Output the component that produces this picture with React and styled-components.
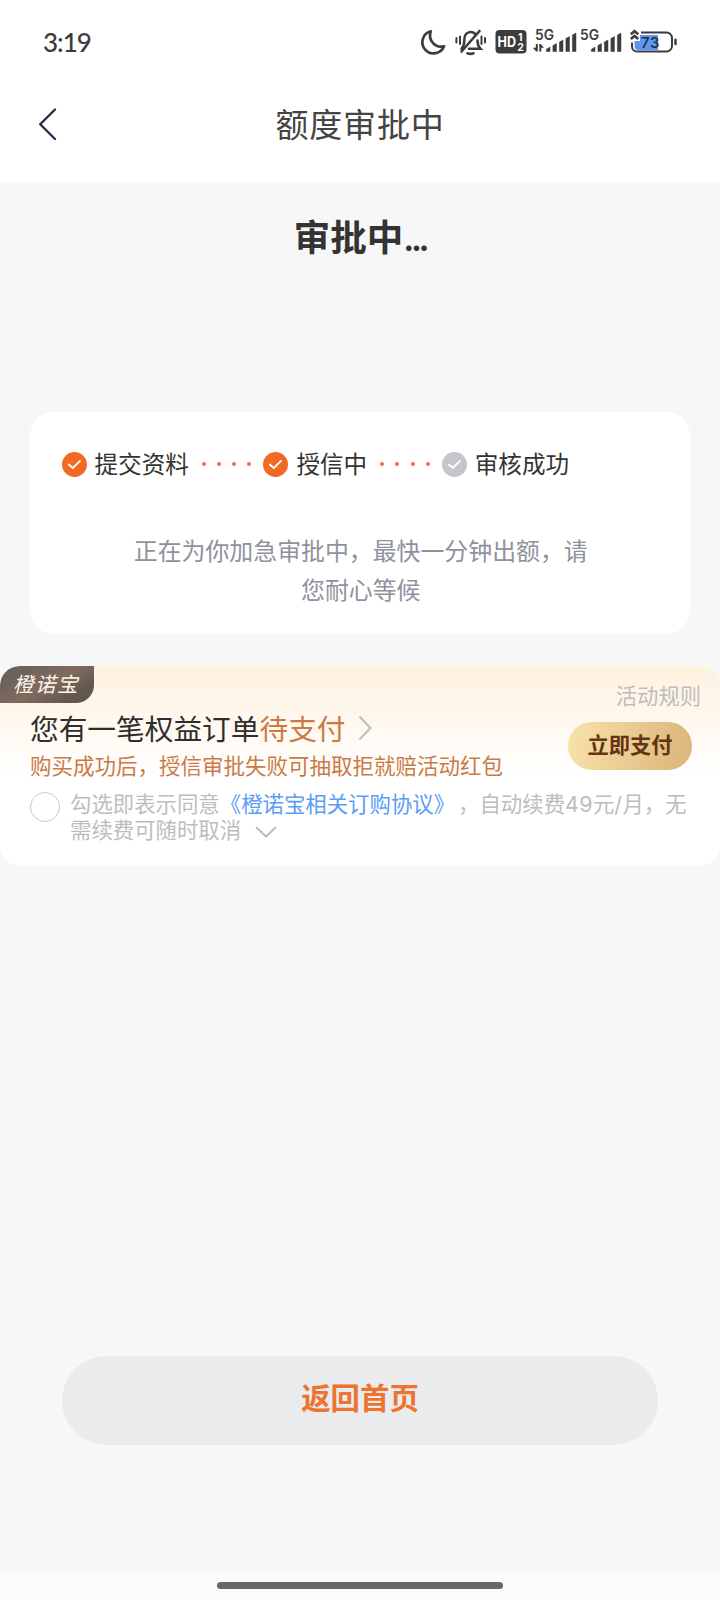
import React from 'react'
import styled, { createGlobalStyle } from 'styled-components'

const GlobalStyle = createGlobalStyle`
  * {
    box-sizing: border-box;
  }
  body {
    margin: 0;
    background: #f7f7f7;
    font-family: "Noto Sans CJK SC", sans-serif;
  }
`

const steps = [
  { label: '提交资料', done: true },
  { label: '授信中', done: true },
  { label: '审核成功', done: false },
]

function Moon() {
  return (
    <svg width="26" height="26" viewBox="0 0 26 26" fill="none">
      <path d="M9.800 2.300A11.200 11.200 0 1 0 23 17.200A11.200 11.200 0 0 1 9.800 2.300Z" stroke="#3c3c3c" strokeWidth="2.700" strokeLinejoin="round" />
    </svg>
  )
}

function BellOff() {
  return (
    <svg width="32" height="28" viewBox="0 0 32 28" fill="none" stroke="#3c3c3c" strokeWidth="2.600" strokeLinecap="round">
      <path d="M6.500 20.800c2.200-2.200 2.800-4 2.800-8.800c0-5 2.600-8 6.200-8c2.400 0 4.300 1 5.400 3" />
      <path d="M14 20.800h11.500c-2.200-2.200-3-4-3-8.300" />
      <path d="M6.500 23.500L24.500 3" />
      <path d="M12.500 25.300q3 1.200 6 0" />
      <path d="M1.400 10v4.500M5 8.500v7.500M26.500 8.500v7.500M30 10v4.500" strokeWidth="2" />
    </svg>
  )
}

function HdBadge() {
  return (
    <svg width="32" height="24" viewBox="0 0 32 24">
      <rect x="0.500" y="0" width="31" height="23.500" rx="4" fill="#3c3c3c" />
      <SvgText x="2.500" y="17" $size={14} fill="#fff" textLength="18.500" lengthAdjust="spacingAndGlyphs">HD</SvgText>
      <SvgText x="23" y="11" $size={10.5} fill="#fff">1</SvgText>
      <SvgText x="22.300" y="21" $size={10.5} fill="#fff">2</SvgText>
    </svg>
  )
}

function Signal({ data }) {
  return (
    <svg width="42" height="26" viewBox="0 0 42 26" fill="#3c3c3c">
      <SvgText x="0" y="11" $size={14.5} $weight={600} textLength="19" lengthAdjust="spacingAndGlyphs">5G</SvgText>
      {data && <path d="M.8 15h2v7.500H1.300L-2.200 18.800h3zM4.300 22.500V15h1.500L9 18.700H6.300v3.800z" />}
      <path d="M11.400 22.500v-2.300l3.600-2.200v4.500zM17.900 22.500v-6l3.600-2v8zM24.400 22.500v-9.500l3.600-2v11.500zM30.900 22.500v-13l3.600-2v15zM37.400 22.500v-16.500l3.600-2v18.500z" stroke="#3c3c3c" strokeWidth="0.500" strokeLinejoin="round" />
    </svg>
  )
}

function Battery() {
  return (
    <svg width="48" height="26" viewBox="0 0 48 26" fill="none">
      <path d="M4.500 12v5a4 4 0 0 0 4 4H28V6H10v6Z" fill="#5c96f5" />
      <path d="M11 3.500h25.500a5.500 5.500 0 0 1 5.500 5.500v8a5.500 5.500 0 0 1-5.500 5.500H7a5 5 0 0 1-5-5v-4" stroke="#3c3c3c" strokeWidth="2" />
      <path d="M0.800 5.200L4.500 2.200L8.300 5.200M0.800 10L4.500 7L8.300 10" stroke="#3c3c3c" strokeWidth="2.600" />
      <path d="M45.500 10.800v4.200" stroke="#3c3c3c" strokeWidth="2.500" strokeLinecap="round" />
      <SvgText x="11" y="18.500" $size={15} $weight={500} fill="#252b3a" textLength="18.500">73</SvgText>
    </svg>
  )
}

function CheckDot({ done }) {
  return (
    <svg width="25" height="25" viewBox="0 0 25 25" fill="none">
      <circle cx="12.500" cy="12.500" r="12.500" fill={done ? '#f06a25' : '#c5c5cb'} />
      <path d="M6.800 12.500L10.800 16L18 8.800" stroke="#fff" strokeWidth="1.800" strokeLinecap="round" strokeLinejoin="round" />
    </svg>
  )
}

function App() {
  return (
    <Page>
      <GlobalStyle />
      <StatusBar>
        <Time>3:19</Time>
        <StatusIcons>
          <Moon />
          <BellOff />
          <HdBadge />
          <Signals>
            <Signal data />
            <Signal />
          </Signals>
          <Battery />
        </StatusIcons>
      </StatusBar>

      <NavBar>
        <svg width="20" height="34" viewBox="0 0 20 34" fill="none">
          <path d="M18 1.500L3.200 16.300L18 31" stroke="#252a48" strokeWidth="2.300" strokeLinecap="round" strokeLinejoin="round" />
        </svg>
        <NavTitle>额度审批中</NavTitle>
      </NavBar>

      <Heading>审批中<Dots>...</Dots></Heading>

      <ProgressCard>
        <Steps>
          {steps.map((step, i) => (
            <React.Fragment key={step.label}>
              {i > 0 && <Trail><i /><i /><i /><i /></Trail>}
              <Step><CheckDot done={step.done} /><span>{step.label}</span></Step>
            </React.Fragment>
          ))}
        </Steps>
        <Hint>正在为你加急审批中，最快一分钟出额，请您耐心等候</Hint>
      </ProgressCard>

      <Promo>
        <PromoHead>
          <Tag>橙诺宝</Tag>
          <Rules>活动规则</Rules>
        </PromoHead>
        <PromoMain>
          <div>
            <OrderTitle>
              您有一笔权益订单<em>待支付</em>
              <svg width="16" height="26" viewBox="0 0 16 26" fill="none">
                <path d="M1.500 1.500L12.500 13L1.500 24.500" stroke="#bdbdc1" strokeWidth="2" />
              </svg>
            </OrderTitle>
            <OrderNote>购买成功后，授信审批失败可抽取拒就赔活动红包</OrderNote>
          </div>
          <PayButton>立即支付</PayButton>
        </PromoMain>
        <Agreement>
          <Radio />
          <AgreementText>
            勾选即表示同意<a>《橙诺宝相关订购协议》</a>，自动续费<Num>49</Num>元<Num>/</Num>月，无需续费可随时取消
            <svg width="24" height="12" viewBox="0 0 24 12" fill="none">
              <path d="M2 1L12 10.500L22 1" stroke="#bdbdc1" strokeWidth="2" />
            </svg>
          </AgreementText>
        </Agreement>
      </Promo>

      <HomeButton>返回首页</HomeButton>
      <GestureBar><span /></GestureBar>
    </Page>
  )
}

const SvgText = styled.text`
  font-family: Inter, sans-serif;
  font-size: ${(p) => p.$size}px;
  font-weight: ${(p) => p.$weight || 700};
`

const Page = styled.div`
  width: 720px;
  height: 1600px;
  display: flex;
  flex-direction: column;
  background: #f7f7f7;
  overflow: hidden;
`

const StatusBar = styled.div`
  height: 84px;
  flex-shrink: 0;
  padding: 0 42px 0 43px;
  display: flex;
  align-items: center;
  justify-content: space-between;
  background: #fff;
`

const Time = styled.div`
  font-family: Lato, sans-serif;
  font-size: 26px;
  font-weight: 500;
  letter-spacing: -1px;
  color: #3c3c3c;
`

const StatusIcons = styled.div`
  display: flex;
  align-items: center;
  gap: 8px;

  svg {
    display: block;
    overflow: visible;
  }
`

const Signals = styled.div`
  display: flex;
  gap: 3px;
`

const NavBar = styled.div`
  height: 98px;
  flex-shrink: 0;
  padding: 0 37px 17px;
  display: grid;
  grid-template-columns: 20px 1fr 20px;
  align-items: center;
  background: #fff;
`

const NavTitle = styled.div`
  padding-bottom: 3px;
  font-size: 33px;
  line-height: 40px;
  letter-spacing: 0.8px;
  text-align: center;
  color: #444;
`

const Heading = styled.h1`
  margin: 27px 0 0;
  height: 55px;
  line-height: 54px;
  font-size: 36.5px;
  font-weight: 700;
  text-align: center;
  color: #333;
`

const Dots = styled.span`
  font-family: Inter, sans-serif;
  font-size: 33px;
  letter-spacing: -3.4px;
`

const ProgressCard = styled.div`
  height: 222px;
  flex-shrink: 0;
  margin: 148px 30px 0;
  padding: 35px 30px 0 31.5px;
  border-radius: 24px;
  background: #fff;
`

const Steps = styled.div`
  display: flex;
  align-items: center;
  height: 34px;
`

const Step = styled.div`
  display: flex;
  align-items: center;
  gap: 8px;
  font-size: 23.6px;
  line-height: 34px;
  color: #333;

  span {
    margin-top: -3px;
  }
`

const Trail = styled.div`
  display: flex;
  gap: 11.2px;
  padding: 0 12px 0 13px;

  i {
    width: 4px;
    height: 4px;
    border-radius: 50%;
    background: #ea7443;
  }
`

const Hint = styled.p`
  width: 470px;
  margin: 50px auto 0;
  font-size: 23.9px;
  line-height: 38.5px;
  text-align: center;
  color: #8f919d;
`

const Promo = styled.div`
  height: 200px;
  flex-shrink: 0;
  margin-top: 32px;
  border-radius: 20px;
  background: linear-gradient(180deg, #fef2e0 0%, #fff8ee 28%, #fff 54%);
  overflow: hidden;
`

const PromoHead = styled.div`
  height: 43px;
  display: flex;
  align-items: flex-start;
  justify-content: space-between;
`

const Tag = styled.div`
  width: 94px;
  height: 37px;
  padding-left: 13px;
  border-radius: 18px 0 18px 0;
  background: linear-gradient(150deg, #6d625b 20%, #806b5e 50%, #62574f 80%);
  color: #fff6ea;
  font-size: 20.5px;
  font-style: italic;
  line-height: 35px;
  letter-spacing: 1.5px;
`

const Rules = styled.div`
  padding: 14px 19px 0 0;
  font-size: 21.3px;
  line-height: 30px;
  color: #bdbdc1;
`

const PromoMain = styled.div`
  height: 75px;
  padding: 0 28px 0 30px;
  display: flex;
  align-items: flex-start;
  justify-content: space-between;
`

const OrderTitle = styled.div`
  display: flex;
  align-items: center;
  height: 36px;
  font-size: 28.7px;
  color: #2e2e2e;

  em {
    font-style: normal;
    color: #cb7a45;
  }
  svg {
    margin: 1px 0 0 12px;
  }
`

const OrderNote = styled.div`
  margin-top: 4px;
  font-size: 21.5px;
  line-height: 32px;
  color: #cb7a45;
`

const PayButton = styled.div`
  width: 124px;
  height: 48px;
  margin-top: 13px;
  border-radius: 24px;
  background: linear-gradient(100deg, #f8e2ab, #dbb479);
  color: #653410;
  font-size: 21.3px;
  font-weight: 700;
  line-height: 44px;
  text-align: center;
`

const Agreement = styled.div`
  display: flex;
  gap: 10px;
  padding-left: 30px;
`

const Radio = styled.span`
  width: 30px;
  height: 30px;
  margin-top: 8px;
  flex-shrink: 0;
  border: 1.5px solid #c8c8cb;
  border-radius: 50%;
`

const AgreementText = styled.div`
  width: 626px;
  margin-top: 7px;
  font-family: "Liberation Sans", "Noto Sans CJK SC", sans-serif;
  font-size: 21.4px;
  line-height: 26px;
  text-spacing-trim: space-all;
  color: #bdbdc1;

  a {
    margin-right: 3px;
    color: #5b9cf4;
  }
  svg {
    margin-left: 13px;
  }
`

const Num = styled.span`
  font-family: Inter, sans-serif;
  letter-spacing: 0.4px;
`

const HomeButton = styled.div`
  width: 596px;
  height: 89px;
  flex-shrink: 0;
  margin: 490px auto 0;
  border-radius: 45px;
  background: #e9ebec;
  color: #ee7330;
  font-size: 29.4px;
  font-weight: 700;
  line-height: 81px;
  text-align: center;
`

const GestureBar = styled.div`
  height: 29px;
  flex-shrink: 0;
  margin-top: auto;
  padding-top: 11px;
  background: #fbfbfb;

  span {
    display: block;
    width: 286px;
    height: 7px;
    margin: 0 auto;
    border-radius: 4px;
    background: #686868;
  }
`

export default App
